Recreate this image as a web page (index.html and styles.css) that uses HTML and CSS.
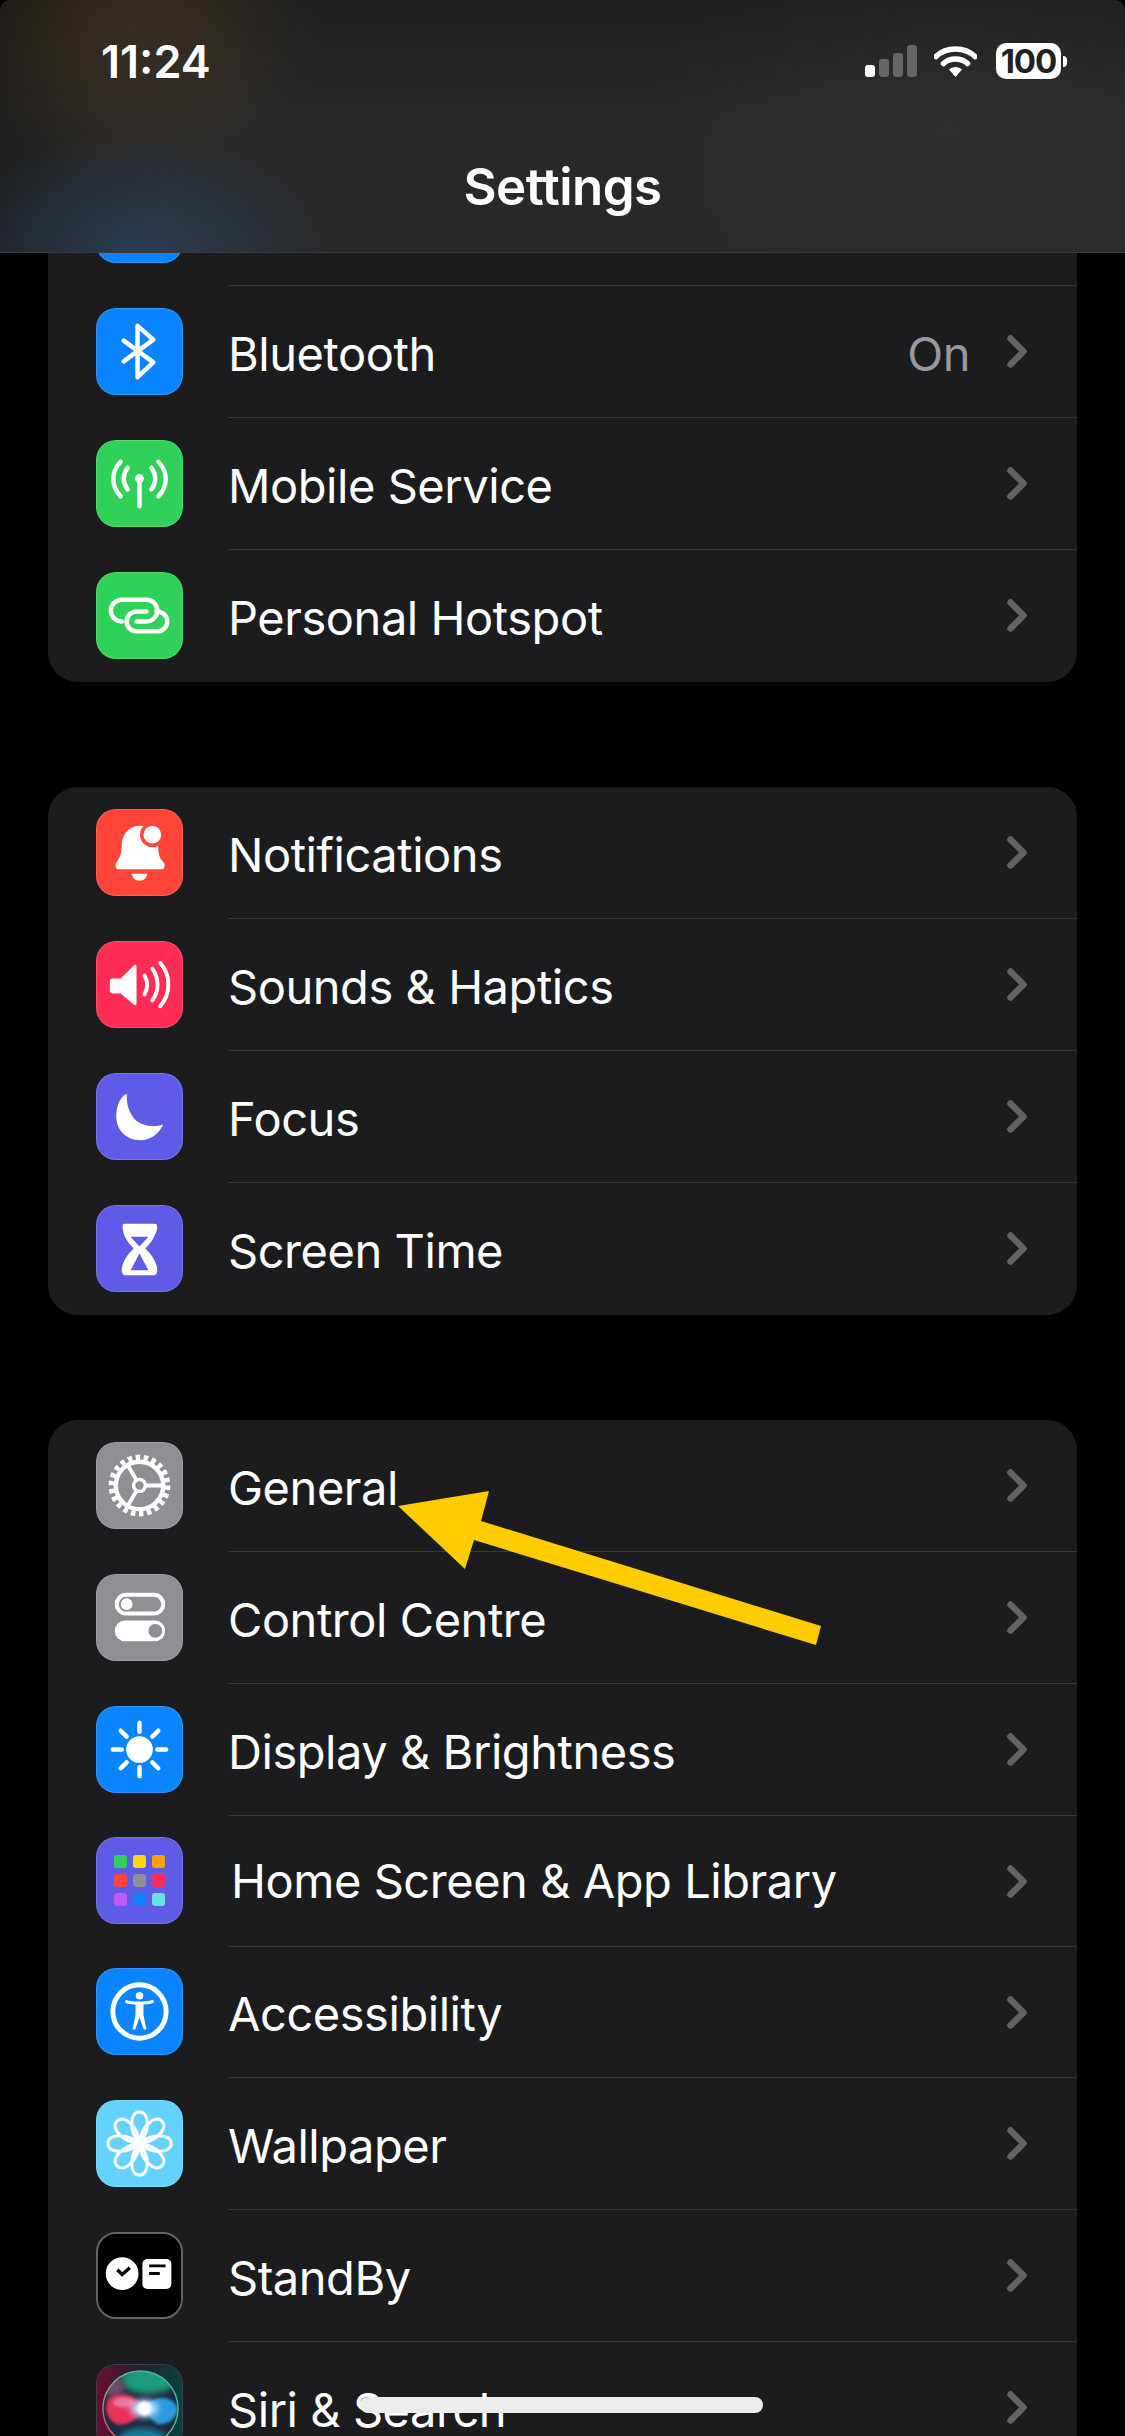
FILE: index.html
```html
<!DOCTYPE html>
<html lang="en">
<head>
  <meta charset="UTF-8">
  <title>Settings</title>
  <link rel="stylesheet" href="styles.css">
</head>
<body>
  <div class="screen">
    <div class="nav-blur">
      <div class="status-bar">
        <span class="clock">11:24</span>
        <div class="status-icons">
          <div class="signal">
            <span class="bar bar-on bar-1"></span>
            <span class="bar bar-2"></span>
            <span class="bar bar-3"></span>
            <span class="bar bar-4"></span>
          </div>
          <svg class="wifi" width="43" height="32" viewBox="0 0 43 32">
            <path d="M2 11.5C12.5 1.5 30.5 1.5 41 11.5" fill="none" stroke="#fff" stroke-width="5.5" stroke-linecap="round"/>
            <path d="M9.5 18.5C16 12.5 27 12.5 33.5 18.5" fill="none" stroke="#fff" stroke-width="5.5" stroke-linecap="round"/>
            <path d="M15 24.5C18.5 21 24.5 21 28 24.5L21.5 32Z" fill="#fff"/>
          </svg>
          <div class="battery">
            <div class="battery-body">100</div>
            <div class="battery-nub"></div>
          </div>
        </div>
      </div>
      <div class="nav-title">Settings</div>
    </div>

    <div class="list">
      <div class="card">
        <div class="row">
          <div class="icon icon-blue"></div>
          <div class="row-body row-body-first"></div>
        </div>
        <div class="row">
          <div class="icon icon-blue">
            <svg viewBox="0 0 86 86"><path d="M27 32L57 54L41 69V17L57 31L27 53" fill="none" stroke="#fff" stroke-width="4.5" stroke-linejoin="round" stroke-linecap="round"/></svg>
          </div>
          <div class="row-body"><span class="label">Bluetooth</span><span class="value">On</span><svg class="chevron" viewBox="0 0 20 33"><path d="M3.5 3.5L16.5 16.5L3.5 29.5" /></svg></div>
        </div>
        <div class="row">
          <div class="icon icon-green">
            <svg viewBox="0 0 86 86">
              <g fill="none" stroke="#fff" stroke-width="4.5" stroke-linecap="round">
                <path d="M43 38V66"/>
                <path d="M31 27C26 34 26 42 31 49"/>
                <path d="M24 21C14 31 14 46 24 56"/>
                <path d="M55 27C60 34 60 42 55 49"/>
                <path d="M62 21C72 31 72 46 62 56"/>
              </g>
              <circle cx="43" cy="38" r="4.5" fill="#fff"/>
            </svg>
          </div>
          <div class="row-body"><span class="label">Mobile Service</span><svg class="chevron" viewBox="0 0 20 33"><path d="M3.5 3.5L16.5 16.5L3.5 29.5" /></svg></div>
        </div>
        <div class="row">
          <div class="icon icon-green">
            <svg viewBox="0 0 86 86">
              <g fill="none" stroke="#fff" stroke-width="4.5" stroke-linecap="round">
                <path d="M25 49A11 11 0 0 1 25 27H50A11 11 0 0 1 50 49H40"/>
                <path d="M60 39A10 10 0 0 1 62 59H40A10 10 0 0 1 40 39H50"/>
              </g>
            </svg>
          </div>
          <div class="row-body"><span class="label">Personal Hotspot</span><svg class="chevron" viewBox="0 0 20 33"><path d="M3.5 3.5L16.5 16.5L3.5 29.5" /></svg></div>
        </div>
      </div>

      <div class="card">
        <div class="row row-tight">
          <div class="icon icon-red">
            <svg viewBox="0 0 86 86">
              <path d="M43 16C31 16 25 26 25 36C25 46 22 50 19.5 53C18 55 18.5 60 22 60H65C69 60 69 55 67.5 53C64 50 62 46 62 38C62 26 54 16 43 16Z" fill="#fff"/>
              <path d="M35 64.500H51C50 69 47 71.500 43 71.500C39 71.500 36 69 35 64.500Z" fill="#fff"/>
              <circle cx="56" cy="25" r="12.500" fill="#ff453a"/>
              <circle cx="56" cy="25" r="9" fill="#fff"/>
            </svg>
          </div>
          <div class="row-body row-body-first"><span class="label">Notifications</span><svg class="chevron" viewBox="0 0 20 33"><path d="M3.5 3.5L16.5 16.5L3.5 29.5" /></svg></div>
        </div>
        <div class="row">
          <div class="icon icon-pink">
            <svg viewBox="0 0 86 86">
              <path d="M16 37H24L37 24C38.500 22.500 40 23 40 25V62C40 64 38.500 65 37 63L24 52H16C14 52 13 51 13 49V40C13 38 14 37 16 37Z" fill="#fff"/>
              <g fill="none" stroke="#fff" stroke-width="4" stroke-linecap="round">
                <path d="M48 34C51.500 40 51.500 47 48 53"/>
                <path d="M56 27C63 37 63 50 56 59"/>
                <path d="M64 21C75 34 75 52 64 65"/>
              </g>
            </svg>
          </div>
          <div class="row-body"><span class="label">Sounds &amp; Haptics</span><svg class="chevron" viewBox="0 0 20 33"><path d="M3.5 3.5L16.5 16.5L3.5 29.5" /></svg></div>
        </div>
        <div class="row">
          <div class="icon icon-indigo">
            <svg viewBox="0 0 86 86"><path d="M30 20C22 24 19.500 35 19.500 43C19.500 57 30 67 44 67C54 67 63 60 67 51C56 55 42 52 36 43C31 36 30 28 30 20Z" fill="#fff"/></svg>
          </div>
          <div class="row-body"><span class="label">Focus</span><svg class="chevron" viewBox="0 0 20 33"><path d="M3.5 3.5L16.5 16.5L3.5 29.5" /></svg></div>
        </div>
        <div class="row">
          <div class="icon icon-indigo">
            <svg viewBox="0 0 86 86">
              <path d="M28 18H58C60 18 61 19 61 22C60 28 56 36 49 43C56 50 61 58 61 65C61 69 59 70 57 70H29C27 70 25 69 25 65C25 58 30 50 37 43C30 36 26 28 26 22C26 19 26 18 28 18Z" fill="#fff"/>
              <path d="M34 31H52L43 41Z" fill="#5e5ce6"/>
              <path d="M43 48L52 65H34Z" fill="#5e5ce6"/>
            </svg>
          </div>
          <div class="row-body"><span class="label">Screen Time</span><svg class="chevron" viewBox="0 0 20 33"><path d="M3.5 3.5L16.5 16.5L3.5 29.5" /></svg></div>
        </div>
      </div>

      <div class="card">
        <div class="row row-tight">
          <div class="icon icon-gray">
            <svg viewBox="0 0 86 86">
              <g fill="none" stroke="#fff">
                <circle cx="43" cy="43" r="24" stroke-width="4.500"/>
                <circle cx="43" cy="43" r="28.500" stroke-width="5.500" stroke-dasharray="4.500 3.640"/>
                <circle cx="43" cy="43" r="6" stroke-width="3.500"/>
                <path d="M49 43H66M40 37.800L31.500 23M40 48.200L31.500 63" stroke-width="4"/>
              </g>
            </svg>
          </div>
          <div class="row-body row-body-first"><span class="label">General</span><svg class="chevron" viewBox="0 0 20 33"><path d="M3.5 3.5L16.5 16.5L3.5 29.5" /></svg></div>
        </div>
        <div class="row">
          <div class="icon icon-gray">
            <svg viewBox="0 0 86 86">
              <rect x="20" y="20" width="47" height="19" rx="9.500" fill="none" stroke="#fff" stroke-width="4"/>
              <circle cx="30" cy="29.500" r="6" fill="#fff"/>
              <rect x="18" y="46" width="51" height="21" rx="10.500" fill="#fff"/>
              <circle cx="59" cy="56.500" r="7" fill="#8e8e93"/>
            </svg>
          </div>
          <div class="row-body"><span class="label">Control Centre</span><svg class="chevron" viewBox="0 0 20 33"><path d="M3.5 3.5L16.5 16.5L3.5 29.5" /></svg></div>
        </div>
        <div class="row">
          <div class="icon icon-blue">
            <svg viewBox="0 0 86 86">
              <circle cx="43" cy="43" r="13.500" fill="#fff"/>
              <path d="M43 16V25M43 61V70M16 43H25M61 43H70M24 24L30 30M56 56L62 62M24 62L30 56M56 30L62 24" stroke="#fff" stroke-width="4.500" stroke-linecap="round"/>
            </svg>
          </div>
          <div class="row-body"><span class="label">Display &amp; Brightness</span><svg class="chevron" viewBox="0 0 20 33"><path d="M3.5 3.5L16.5 16.5L3.5 29.5" /></svg></div>
        </div>
        <div class="row row-tight">
          <div class="icon icon-indigo">
            <div class="app-grid">
              <span class="dot dot-green"></span><span class="dot dot-yellow"></span><span class="dot dot-orange"></span>
              <span class="dot dot-red"></span><span class="dot dot-gray"></span><span class="dot dot-pink"></span>
              <span class="dot dot-purple"></span><span class="dot dot-blue"></span><span class="dot dot-cyan"></span>
            </div>
          </div>
          <div class="row-body"><span class="label label-shifted">Home Screen &amp; App Library</span><svg class="chevron" viewBox="0 0 20 33"><path d="M3.5 3.5L16.5 16.5L3.5 29.5" /></svg></div>
        </div>
        <div class="row row-tight">
          <div class="icon icon-blue">
            <svg viewBox="0 0 86 86">
              <circle cx="43" cy="43" r="27" fill="none" stroke="#fff" stroke-width="5"/>
              <circle cx="43" cy="27" r="3.800" fill="#fff"/>
              <path d="M30 33C35 35 51 35 56 33" fill="none" stroke="#fff" stroke-width="3.200" stroke-linecap="round"/>
              <path d="M39 35H47V46L50 61L47.500 61.500L43 49L38.500 61.500L36 61L39 46Z" fill="#fff"/>
            </svg>
          </div>
          <div class="row-body"><span class="label">Accessibility</span><svg class="chevron" viewBox="0 0 20 33"><path d="M3.5 3.5L16.5 16.5L3.5 29.5" /></svg></div>
        </div>
        <div class="row">
          <div class="icon icon-sky">
            <svg viewBox="0 0 86 86">
              <g fill="none" stroke="#fff" stroke-width="3.200">
                <path id="petal" d="M43 43C32 30 33 11 43 11C53 11 54 30 43 43Z"/>
                <use href="#petal" transform="rotate(45 43 43)"/>
                <use href="#petal" transform="rotate(90 43 43)"/>
                <use href="#petal" transform="rotate(135 43 43)"/>
                <use href="#petal" transform="rotate(180 43 43)"/>
                <use href="#petal" transform="rotate(225 43 43)"/>
                <use href="#petal" transform="rotate(270 43 43)"/>
                <use href="#petal" transform="rotate(315 43 43)"/>
              </g>
              <circle cx="43" cy="43" r="3.500" fill="#fff"/>
            </svg>
          </div>
          <div class="row-body"><span class="label">Wallpaper</span><svg class="chevron" viewBox="0 0 20 33"><path d="M3.5 3.5L16.5 16.5L3.5 29.5" /></svg></div>
        </div>
        <div class="row">
          <div class="icon icon-black">
            <svg viewBox="0 0 86 86">
              <circle cx="25" cy="41" r="17" fill="#fff"/>
              <path d="M20 37L25 42L33 35" fill="none" stroke="#000" stroke-width="3.500"/>
              <rect x="46" y="26" width="30" height="31" rx="5" fill="#fff"/>
              <path d="M53 33H70M53 41H64" stroke="#000" stroke-width="3"/>
            </svg>
          </div>
          <div class="row-body"><span class="label">StandBy</span><svg class="chevron" viewBox="0 0 20 33"><path d="M3.5 3.5L16.5 16.5L3.5 29.5" /></svg></div>
        </div>
        <div class="row">
          <div class="icon icon-siri">
            <svg viewBox="0 0 86 86">
              <defs>
                <filter id="soft" x="-50%" y="-50%" width="200%" height="200%"><feGaussianBlur stdDeviation="3"/></filter>
                <filter id="softer" x="-50%" y="-50%" width="200%" height="200%"><feGaussianBlur stdDeviation="1.500"/></filter>
                <clipPath id="orb-clip"><circle cx="44" cy="44" r="38"/></clipPath>
                <linearGradient id="siri-bg" x1="0" y1="0" x2="1" y2="0">
                  <stop offset="0" stop-color="#6a0c32"/>
                  <stop offset="0.5" stop-color="#22202e"/>
                  <stop offset="1" stop-color="#0c4040"/>
                </linearGradient>
                <linearGradient id="siri-rim" x1="0" y1="1" x2="1" y2="0">
                  <stop offset="0" stop-color="#d84a68"/>
                  <stop offset="0.5" stop-color="#6fae90"/>
                  <stop offset="1" stop-color="#26c094"/>
                </linearGradient>
              </defs>
              <rect width="86" height="86" fill="url(#siri-bg)"/>
              <circle cx="44" cy="44" r="38" fill="#1e2a3e"/>
              <g clip-path="url(#orb-clip)">
                <ellipse cx="52" cy="15" rx="28" ry="14" fill="#1f9c78" filter="url(#soft)"/>
                <ellipse cx="16" cy="22" rx="12" ry="10" fill="#70506a" filter="url(#soft)"/>
                <ellipse cx="46" cy="76" rx="24" ry="12" fill="#16809c" filter="url(#soft)"/>
                <path d="M48 44C40 28 20 26 11 35C7 43 10 56 20 60C32 62 42 54 48 44Z" fill="#e8305a" filter="url(#softer)"/>
                <path d="M48 44C56 30 74 30 81 42C83 52 74 60 62 60C56 58 52 50 48 44Z" fill="#2a9be0" filter="url(#softer)"/>
                <ellipse cx="27" cy="38" rx="11" ry="5" fill="#e878a0" filter="url(#softer)"/>
                <ellipse cx="48" cy="44" rx="14" ry="9" fill="#bcdcff" filter="url(#soft)"/>
                <circle cx="48" cy="44" r="7" fill="#fff" filter="url(#softer)"/>
              </g>
              <circle cx="44" cy="44" r="38" fill="none" stroke="url(#siri-rim)" stroke-width="1.500"/>
            </svg>
          </div>
          <div class="row-body"><span class="label">Siri &amp; Search</span><svg class="chevron" viewBox="0 0 20 33"><path d="M3.5 3.5L16.5 16.5L3.5 29.5" /></svg></div>
        </div>
      </div>
    </div>

    <!-- annotation drawn on top of the screenshot -->
    <svg class="arrow" width="1125" height="2436" viewBox="0 0 1125 2436">
      <path d="M398 1506L489 1491L481 1521L821 1626L816 1645L474 1540L465 1569Z" fill="#ffcc00"/>
    </svg>
    <div class="home-bar"></div>
  </div>
</body>
</html>
```

FILE: styles.css
```css
* {
  margin: 0;
  padding: 0;
  box-sizing: border-box;
}
html, body {
  background: #000;
}
body {
  font-family: Inter, 'Liberation Sans', sans-serif;
  color: #fff;
}
.screen {
  position: relative;
  width: 1125px;
  height: 2436px;
  overflow: hidden;
  background: #000;
}

/* Top bar, floats over the scrolled list */
.nav-blur {
  position: absolute;
  top: 0;
  left: 0;
  z-index: 2;
  width: 100%;
  height: 253px;
  border-radius: 10px 10px 0 0;
  border-bottom: 1px solid #3a3a3c;
  background:
    radial-gradient(ellipse 190px 120px at 135px 250px, rgba(45, 90, 135, 0.42), rgba(45, 90, 135, 0) 100%),
    radial-gradient(ellipse 190px 150px at 130px 30px, rgba(105, 75, 25, 0.32), rgba(105, 75, 25, 0) 100%),
    radial-gradient(ellipse 300px 200px at 950px 130px, rgba(70, 70, 72, 0.22), rgba(70, 70, 72, 0) 100%),
    linear-gradient(90deg, rgba(0, 0, 0, 0.25), rgba(0, 0, 0, 0) 15%),
    linear-gradient(#1f1f20, #282829 45%, #29292a);
}
.status-bar {
  display: flex;
  align-items: center;
  justify-content: space-between;
  height: 36px;
  margin-top: 43px;
  padding: 0 58px 0 101px;
}
.clock {
  font-size: 45px;
  font-weight: 600;
}
.status-icons {
  display: flex;
  align-items: center;
}
.signal {
  display: flex;
  align-items: flex-end;
  gap: 4px;
  height: 32px;
  margin-right: 17px;
}
.bar {
  width: 10px;
  border-radius: 3px;
  background: #666;
}
.bar-on {
  background: #fff;
}
.bar-1 { height: 12px; }
.bar-2 { height: 18px; }
.bar-3 { height: 24px; }
.bar-4 { height: 32px; }
.wifi {
  margin-right: 19px;
}
.battery {
  display: flex;
  align-items: center;
  gap: 2px;
}
.battery-body {
  width: 65px;
  height: 36px;
  border-radius: 10px;
  background: #fff;
  color: #222;
  font-size: 33px;
  font-weight: 700;
  line-height: 36px;
  letter-spacing: -1px;
  text-align: center;
}
.battery-nub {
  width: 4px;
  height: 11px;
  border-radius: 0 4px 4px 0;
  background: #fff;
}
.nav-title {
  margin-top: 78px;
  font-size: 51px;
  font-weight: 600;
  line-height: 60px;
  letter-spacing: -0.5px;
  text-align: center;
}

/* Settings groups */
.list {
  display: flex;
  flex-direction: column;
  gap: 105px;
  padding: 153px 48px 0;
}
.card {
  flex-shrink: 0;
  padding-bottom: 1px;
  border-radius: 30px;
  background: #1c1c1e;
  overflow: hidden;
}
.row {
  display: flex;
  align-items: center;
  height: 132px;
  padding-left: 48px;
}
.row-tight {
  height: 131px;
}
.row-body {
  display: flex;
  flex: 1;
  align-items: center;
  align-self: stretch;
  margin-left: 45px;
  padding-right: 50px;
  border-top: 1px solid #38383a;
}
.row-body-first {
  border-top: 0;
}
.label {
  flex: 1;
  margin-top: 3px;
  font-size: 47px;
  font-weight: 400;
  letter-spacing: -0.45px;
}
.label-shifted {
  margin-top: -2px;
  padding-left: 3px;
}
.value {
  margin-top: 3px;
  margin-right: 37px;
  color: #98989f;
  font-size: 47px;
  letter-spacing: -0.45px;
}
.chevron {
  width: 20px;
  height: 33px;
  fill: none;
  stroke: #636366;
  stroke-width: 6.5;
  stroke-linecap: round;
  stroke-linejoin: round;
}

/* App icons */
.icon {
  flex-shrink: 0;
  width: 87px;
  height: 87px;
  border: 1px solid rgba(255, 255, 255, 0.16);
  border-radius: 20px;
  overflow: hidden;
}
.icon svg {
  display: block;
  width: 85px;
  height: 85px;
}
.icon-blue { background: #0a84ff; }
.icon-green { background: #30d158; }
.icon-red { background: #ff453a; }
.icon-pink { background: #ff2d55; }
.icon-indigo { background: #5e5ce6; }
.icon-gray { background: #8e8e93; }
.icon-sky { background: #64d2ff; }
.icon-black {
  background: #000;
  border: 2px solid #636366;
}
.icon-black svg {
  width: 83px;
  height: 83px;
}
.icon-siri { background: #1d1b2b; }
.app-grid {
  display: grid;
  grid-template-columns: repeat(3, 13px);
  grid-auto-rows: 13px;
  gap: 6px;
  padding: 17px 0 0 17px;
}
.dot {
  border-radius: 3px;
}
.dot-green { background: #30d158; }
.dot-yellow { background: #ffd60a; }
.dot-orange { background: #ff9f0a; }
.dot-red { background: #ff453a; }
.dot-gray { background: #8e8e93; }
.dot-pink { background: #ff2d55; }
.dot-purple { background: #bf5af2; }
.dot-blue { background: #0a84ff; }
.dot-cyan { background: #64e4e4; }

/* Overlays */
.arrow {
  position: absolute;
  top: 0;
  left: 0;
  z-index: 3;
  pointer-events: none;
}
.home-bar {
  position: absolute;
  left: 360px;
  top: 2397px;
  z-index: 3;
  width: 403px;
  height: 16px;
  border-radius: 8px;
  background: #ececec;
}
```
